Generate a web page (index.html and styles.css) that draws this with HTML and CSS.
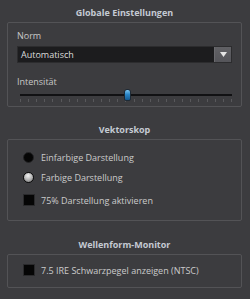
FILE: index.html
```html
<!DOCTYPE html>
<html>
<head>
<meta charset="utf-8">
<link rel="stylesheet" href="styles.css">
</head>
<body>
<div class="panel">
  <div class="section">
    <div class="title">Globale Einstellungen</div>
    <div class="box box-global">
      <div class="label">Norm</div>
      <div class="select">
        <span class="select-text">Automatisch</span>
        <span class="select-btn"><svg width="7" height="5" viewBox="0 0 7 5"><path d="M0 0 H7 L3.5 5 Z" fill="#e6e6e6"/></svg></span>
      </div>
      <div class="label label-int">Intensität</div>
      <div class="slider">
        <div class="track"></div>
        <div class="ticks">
          <i></i><i></i><i></i><i></i><i></i><i></i><i></i><i></i><i></i>
          <i></i><i></i><i></i><i></i><i></i><i></i><i></i><i></i><i></i>
          <i></i><i></i><i></i><i></i><i></i><i></i><i></i><i></i><i></i>
        </div>
        <div class="thumb"></div>
      </div>
    </div>
  </div>
  <div class="section">
    <div class="title">Vektorskop</div>
    <div class="box box-vec">
      <div class="row"><span class="radio"></span><span>Einfarbige Darstellung</span></div>
      <div class="row"><span class="radio checked"></span><span>Farbige Darstellung</span></div>
      <div class="row row-check"><span class="check"></span><span>75% Darstellung aktivieren</span></div>
    </div>
  </div>
  <div class="section section-wave">
    <div class="title">Wellenform-Monitor</div>
    <div class="box box-wave">
      <div class="row"><span class="check"></span><span>7.5 IRE Schwarzpegel anzeigen (NTSC)</span></div>
    </div>
  </div>
</div>
</body>
</html>
```
FILE: styles.css
```css
html, body {
  margin: 0;
  padding: 0;
  background: #3c3c3f;
}
body {
  width: 250px;
  height: 299px;
  overflow: hidden;
  font-family: "Open Sans", "DejaVu Sans", sans-serif;
  font-size: 9px;
  color: #c9c9c9;
}
.panel {
  padding: 0 8px 0 7px;
}
.title {
  height: 12px;
  line-height: 12px;
  text-align: center;
  font-weight: bold;
  color: #c4cad3;
  margin-bottom: 3px;
  padding-top: 7px;
}
.section + .section .title {
  padding-top: 17px;
}
.section-wave {
  margin-top: 1px;
}
.box {
  border: 1px solid #535356;
  border-radius: 2px;
}
.box-global {
  padding: 7px 9px 0 9px;
  height: 76px;
}
.label {
  height: 12px;
  line-height: 12px;
}
.select {
  margin-top: 4px;
  height: 17px;
  box-sizing: border-box;
  border: 1px solid #2c2c2e;
  background: #1c1c1e;
  display: flex;
  align-items: center;
  justify-content: space-between;
}
.select-text {
  padding-left: 3px;
  color: #dcdcdc;
}
.select-btn {
  width: 16px;
  height: 15px;
  background: linear-gradient(#616165, #55555a);
  border-left: 1px solid #6a6a6e;
  display: flex;
  align-items: center;
  justify-content: center;
}
.label-int {
  margin-top: 13px;
}
.slider {
  position: relative;
  margin-top: 1px;
  height: 14px;
  margin-left: 3px;
}
.track {
  position: absolute;
  left: 0;
  right: 0;
  top: 5px;
  height: 2px;
  background: #111113;
}
.ticks {
  position: absolute;
  left: 0;
  right: 0;
  top: 10px;
  height: 3px;
  display: flex;
  justify-content: space-between;
}
.ticks i {
  width: 1px;
  height: 3px;
  background: #58585b;
}
.thumb {
  position: absolute;
  left: 104px;
  top: 0;
  width: 5px;
  height: 10px;
  border: 1px solid #1d2a36;
  border-radius: 3px 3px 2px 2px;
  background: linear-gradient(#7cc6f2, #2a86c8 45%, #14588f);
}
.box-vec {
  padding: 7px 9px 10px 15px;
}
.row {
  height: 20px;
  display: flex;
  align-items: center;
  gap: 7px;
  color: #cbcbcb;
}
.row-check {
  margin-top: 3px;
  gap: 6px;
}
.radio {
  width: 9px;
  height: 9px;
  border-radius: 50%;
  border: 1px solid #252527;
  background: #050505;
}
.radio.checked {
  border-color: #0a0a0a;
  background: radial-gradient(circle at 45% 30%, #f2f2f2, #b5b5b5 50%, #6a6a6a);
}
.check {
  width: 10px;
  height: 10px;
  border: 1px solid #2a2a2c;
  background: #050505;
}
.box-wave {
  padding: 5px 9px 7px 15px;
}
.box-wave .row {
  gap: 6px;
}
```
